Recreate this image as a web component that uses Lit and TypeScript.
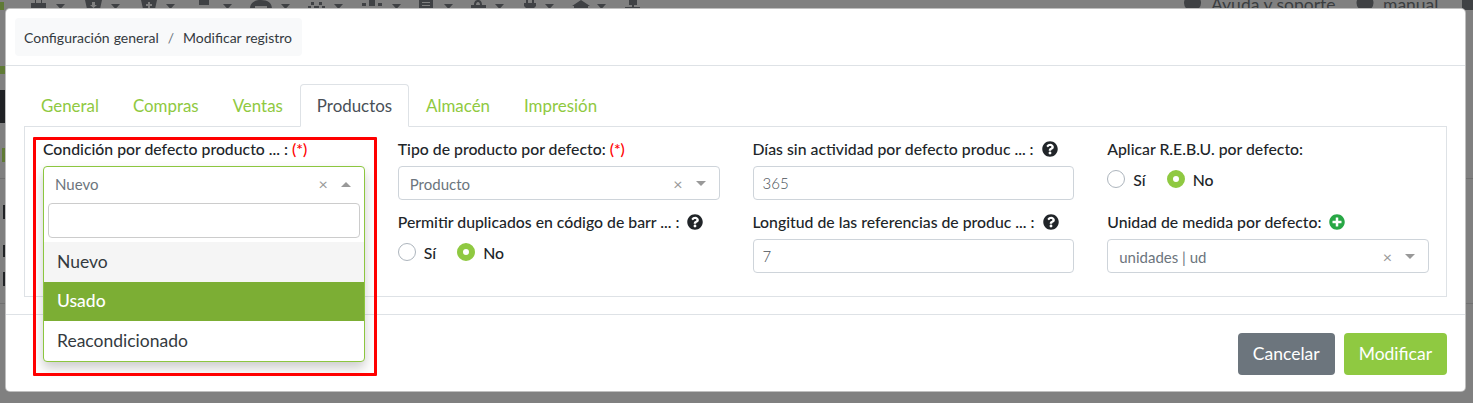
import { LitElement, html, css, svg } from 'lit';

const QUESTION =
    'M504 256c0 136.997-111.043 248-248 248S8 392.997 8 256C8 119.083 119.043 8 256 8s248 111.083 248 248zM262.655 90c-54.497 0-89.255 22.957-116.549 63.758-3.536 5.286-2.353 12.415 2.715 16.258l34.699 26.31c5.205 3.947 12.621 3.008 16.665-2.122 17.864-22.658 30.113-35.797 57.303-35.797 20.429 0 45.698 13.148 45.698 32.958 0 14.976-12.363 22.667-32.534 33.976C247.128 238.528 216 254.941 216 296v4c0 6.627 5.373 12 12 12h56c6.627 0 12-5.373 12-12v-1.333c0-28.462 83.186-29.647 83.186-106.667 0-58.002-60.165-102-116.531-102zM256 338c-25.365 0-46 20.635-46 46 0 25.364 20.635 46 46 46s46-20.636 46-46c0-25.365-20.635-46-46-46z';
const PLUS =
    'M256 8C119 8 8 119 8 256s111 248 248 248 248-111 248-248S393 8 256 8zm144 276c0 6.6-5.4 12-12 12h-92v92c0 6.6-5.4 12-12 12h-56c-6.6 0-12-5.4-12-12v-92h-92c-6.6 0-12-5.4-12-12v-56c0-6.6 5.4-12 12-12h92v-92c0-6.6 5.4-12 12-12h56c6.6 0 12 5.4 12 12v92h92c6.6 0 12 5.4 12 12v56z';

// Toolbar of the page behind the modal: only the bottom of each icon shows.
// Each entry is the caret x and the path of the visible part of the icon.
const TOOLBAR_ICONS = [
    [56, 'M31 3h15v6H31zM35 0h1v3h-1zM41 0h1v3h-1z'],
    [111, 'M85 0h17l-2 9H87zM92 2v3h-2l3.500 3 3.500-3h-2V2z'],
    [166, 'M141 0h16l-2 9h-12zM148 2v2h-2v2h2v2h2V6h2V4h-2V2z'],
    [223, 'M199 0h10v5h-10zM193 8h4v1h-4zM199 8h4v1h-4zM205 8h4v1h-4z'],
    [281, 'M250 9c0-6 4-9 11-9s11 3 11 9h-5V6h-12v3z'],
    [334, 'M311 2h3v3h-3zM319 2h3v3h-3zM308 6h3v3h-3zM322 6h3v3h-3zM314 6h5v3h-5z'],
    [392, 'M369 0h6v6h-6zM362 3h4v3h-4zM378 3h4v3h-4zM362 8h20v1h-20z'],
    [444, 'M419 0h14v9h-14zM422 2v1h8V2zM422 5v1h8V5z'],
    [495, 'M471 5h15v4h-15zM474 5c0-4 2-5 4-5s4 1 4 5h-2c0-2-1-3-2-3s-2 1-2 3z'],
    [545, 'M526 0h2v3h-2zM532 0h2v3h-2zM524 3h12v3l-3 3h-6l-3-3z'],
    [597, 'M581 0l9 6-2 0v3h-14V6h-2z'],
    [0, 'M629 0h8v5h-8zM632 5h2v2h-2zM625 7h15v2h-15z'],
];

const TABS = ['General', 'Compras', 'Ventas', 'Productos', 'Almacén', 'Impresión'];

export class AppRoot extends LitElement {
    static styles = css`
        :host {
            display: block;
            position: relative;
            height: 403px;
            overflow: hidden;
            background: #808080;
            font-family: Lato, 'Liberation Sans', sans-serif;
            font-size: 15.8px;
            color: #212529;
        }
        .behind {
            position: absolute;
            inset: 0;
        }
        .toolbar {
            position: absolute;
            left: 0;
            top: 0;
            fill: #3f4144;
        }
        .top-text {
            position: absolute;
            top: -6px;
            font-size: 17.5px;
            line-height: 22px;
            color: #3a3d3f;
        }
        .sliver {
            position: absolute;
            left: 3px;
            width: 3px;
            background: #1f2124;
        }
        .sliver.block {
            left: 0;
            width: 6px;
        }
        .sliver.green {
            left: 0;
            width: 6px;
            background: #5f7a35;
        }
        .rule {
            position: absolute;
            left: 0;
            right: 0;
            height: 1px;
            background: #707070;
        }
        .modal {
            position: relative;
            box-sizing: border-box;
            margin: 8px 7px 0 5px;
            height: 384px;
            background: #fff;
            border: 1px solid rgba(0, 0, 0, 0.25);
            border-radius: 5px;
            display: flex;
            flex-direction: column;
        }
        .modal-header {
            box-sizing: border-box;
            height: 57px;
            padding: 9px 9px 0;
            border-bottom: 1px solid #dee2e6;
        }
        .breadcrumb {
            display: inline-flex;
            align-items: center;
            height: 38px;
            padding: 0 10px 0 9px;
            background: #f8f9fa;
            border-radius: 4px;
            font-size: 14px;
            color: #343a40;
            word-spacing: 0.4px;
        }
        .breadcrumb .sep {
            padding: 0 9px;
            color: #6c757d;
        }
        .modal-body {
            box-sizing: border-box;
            height: 249px;
            padding: 18px 18px 0;
            border-bottom: 1px solid #dee2e6;
        }
        .tabs {
            display: flex;
            height: 42px;
            box-sizing: border-box;
        }
        .tab {
            box-sizing: border-box;
            height: 43px;
            padding: 0 16px;
            border: 1px solid transparent;
            border-radius: 4px 4px 0 0;
            font-size: 16.9px;
            line-height: 41px;
            color: #8fc941;
            position: relative;
            z-index: 1;
        }
        .tab.active {
            color: #495057;
            background: #fff;
            border-color: #dee2e6 #dee2e6 #fff;
        }
        .panel {
            box-sizing: border-box;
            height: 171px;
            padding: 11px 17px 0 18px;
            border: 1px solid #dee2e6;
            display: grid;
            grid-template-columns: repeat(4, 1fr);
            column-gap: 33px;
        }
        .col {
            position: relative;
        }
        .field {
            margin-bottom: 11px;
        }
        .label {
            box-sizing: border-box;
            display: flex;
            align-items: center;
            height: 22px;
            padding-bottom: 1px;
            margin-bottom: 6px;
            font-weight: 500;
            white-space: nowrap;
        }
        .req {
            color: #f00;
            margin-left: 4px;
        }
        .label svg {
            width: 16px;
            height: 16px;
            margin-left: 8px;
        }
        .help {
            fill: #212529;
        }
        .add {
            fill: #28a745;
        }
        .control {
            box-sizing: border-box;
            display: flex;
            align-items: center;
            height: 34px;
            padding: 1px 13px 0 11px;
            border: 1px solid #ced4da;
            border-radius: 4px;
            color: #6c757d;
            background: #fff;
            font-size: 15px;
        }
        .control.input {
            padding: 0 9px;
            font-weight: 300;
            color: #495057;
        }
        .clear {
            margin-left: auto;
            font-size: 16px;
            line-height: 1;
            color: #999;
        }
        .caret {
            width: 0;
            height: 0;
            margin-left: 13px;
            border-style: solid;
            border-width: 5px 5px 0;
            border-color: #999 transparent transparent;
        }
        .caret.up {
            border-width: 0 5px 5px;
            border-color: transparent transparent #999;
        }
        .radios {
            box-sizing: border-box;
            display: flex;
            align-items: center;
            height: 34px;
            padding-bottom: 8px;
            font-weight: 500;
        }
        .radio {
            box-sizing: border-box;
            width: 18px;
            height: 18px;
            margin-right: 8px;
            border: 1px solid #adb5bd;
            border-radius: 50%;
            background: #fff;
        }
        .radio.on {
            border: 6px solid #8fc941;
        }
        .radios .yes {
            margin-right: 21px;
        }
        .select2 {
            position: absolute;
            left: 0;
            right: 0;
            top: 28px;
            z-index: 2;
            border: 1px solid #8cc63f;
            border-radius: 4px;
            background: #fff;
            box-shadow: 0 6px 12px rgba(0, 0, 0, 0.2);
            font-size: 15px;
        }
        .select2-head {
            display: flex;
            align-items: center;
            height: 36px;
            box-sizing: border-box;
            padding: 0 13px 2px 11px;
            color: #6c757d;
        }
        .search {
            padding: 0 4px 4px;
        }
        .search div {
            box-sizing: border-box;
            height: 35px;
            border: 1px solid #ccc;
            border-radius: 4px;
        }
        .option {
            box-sizing: border-box;
            height: 39.5px;
            padding-left: 13px;
            font-size: 17.5px;
            line-height: 39px;
            color: #343a40;
        }
        .option.hover {
            background: #f5f5f5;
        }
        .option.selected {
            background: #7cae34;
            color: #fff;
            font-weight: 500;
            line-height: 38px;
        }
        .option:last-child {
            border-radius: 0 0 3px 3px;
        }
        .highlight {
            position: absolute;
            left: -10px;
            top: -1px;
            width: 344px;
            height: 239px;
            box-sizing: border-box;
            border: 3px solid #f00;
            border-radius: 1px;
            z-index: 3;
            pointer-events: none;
        }
        .modal-footer {
            display: flex;
            justify-content: flex-end;
            gap: 9px;
            padding: 18px 18px 0;
        }
        .btn {
            box-sizing: border-box;
            height: 42px;
            padding: 0 15px;
            border-radius: 4px;
            font-size: 17.5px;
            line-height: 42px;
            color: #fff;
            background: #8fc941;
        }
        .btn.cancel {
            background: #6c757d;
        }
    `;

    _icon(path, cls) {
        return html`<svg class=${cls} viewBox="0 0 512 512"><path d=${path}></path></svg>`;
    }

    _label(text, { required = false, help = false, add = false } = {}) {
        return html`
            <div class="label">
                ${text}
                ${required ? html`<span class="req">(*)</span>` : ''}
                ${help ? this._icon(QUESTION, 'help') : ''}
                ${add ? this._icon(PLUS, 'add') : ''}
            </div>
        `;
    }

    _select(value) {
        return html`
            <div class="control">
                ${value}
                <span class="clear">×</span>
                <span class="caret"></span>
            </div>
        `;
    }

    _radios() {
        return html`
            <div class="radios">
                <span class="radio"></span><span class="yes">Sí</span>
                <span class="radio on"></span><span>No</span>
            </div>
        `;
    }

    _behind() {
        return html`
            <div class="behind">
                <svg class="toolbar" width="1473" height="10">
                    ${TOOLBAR_ICONS.map(
                        ([caret, d]) => svg`
                            <path d=${d}></path>
                            ${caret ? svg`<path d="M${caret} 4h9l-4.500 5z"></path>` : ''}
                        `,
                    )}
                    <circle cx="1192.5" cy="3" r="8.5"></circle>
                    <circle cx="1365" cy="3" r="8.5"></circle>
                    <rect x="1462" y="0" width="11" height="10"></rect>
                </svg>
                <span class="top-text" style="left:1211px">Ayuda y soporte</span>
                <span class="top-text" style="left:1383px">manual</span>
                <div class="sliver green" style="top:2px;height:8px;width:4px"></div>
                <div class="sliver green" style="top:66px;height:8px"></div>
                <div class="sliver block" style="top:90px;height:33px"></div>
                <div class="sliver green" style="top:148px;height:14px;left:2px;width:4px"></div>
                <div class="sliver" style="top:205px;height:14px"></div>
                <div class="sliver" style="top:245px;height:12px"></div>
                <div class="sliver" style="top:272px;height:14px"></div>
                <div class="rule" style="top:178px"></div>
                <div class="rule" style="top:303px"></div>
            </div>
        `;
    }

    render() {
        return html`
            ${this._behind()}
            <div class="modal">
                <div class="modal-header">
                    <div class="breadcrumb">
                        Configuración general<span class="sep">/</span>Modificar registro
                    </div>
                </div>
                <div class="modal-body">
                    <div class="tabs">
                        ${TABS.map(
                            (tab) => html`<div class="tab ${tab === 'Productos' ? 'active' : ''}">${tab}</div>`,
                        )}
                    </div>
                    <div class="panel">
                        <div class="col">
                            ${this._label('Condición por defecto producto ... :', { required: true })}
                            <div class="select2">
                                <div class="select2-head">
                                    Nuevo
                                    <span class="clear">×</span>
                                    <span class="caret up"></span>
                                </div>
                                <div class="search"><div></div></div>
                                <div class="option hover">Nuevo</div>
                                <div class="option selected">Usado</div>
                                <div class="option">Reacondicionado</div>
                            </div>
                            <div class="highlight"></div>
                        </div>
                        <div class="col">
                            <div class="field">
                                ${this._label('Tipo de producto por defecto:', { required: true })}
                                ${this._select('Producto')}
                            </div>
                            ${this._label('Permitir duplicados en código de barr ... :', { help: true })}
                            ${this._radios()}
                        </div>
                        <div class="col">
                            <div class="field">
                                ${this._label('Días sin actividad por defecto produc ... :', { help: true })}
                                <div class="control input">365</div>
                            </div>
                            ${this._label('Longitud de las referencias de produc ... :', { help: true })}
                            <div class="control input">7</div>
                        </div>
                        <div class="col">
                            <div class="field">
                                ${this._label('Aplicar R.E.B.U. por defecto:')}
                                ${this._radios()}
                            </div>
                            ${this._label('Unidad de medida por defecto:', { add: true })}
                            ${this._select('unidades | ud')}
                        </div>
                    </div>
                </div>
                <div class="modal-footer">
                    <div class="btn cancel">Cancelar</div>
                    <div class="btn">Modificar</div>
                </div>
            </div>
        `;
    }
}

customElements.define('app-root', AppRoot);
